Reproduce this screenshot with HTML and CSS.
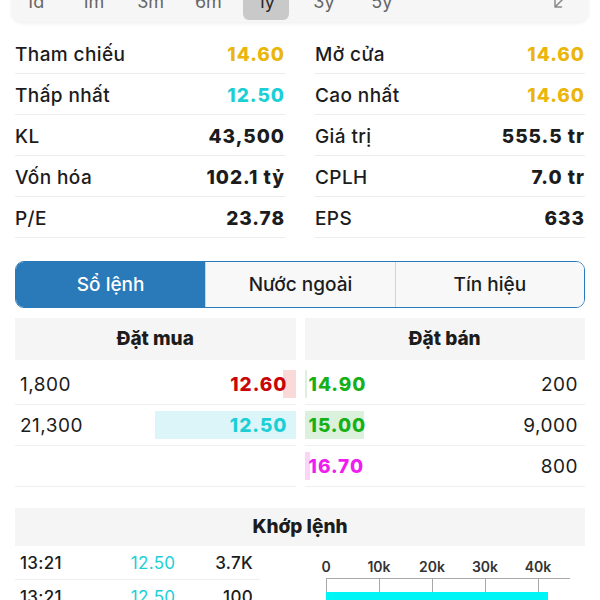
FILE: index.html
```html
<!DOCTYPE html>
<html lang="vi">
<head>
    <meta charset="UTF-8">
    <meta name="viewport" content="width=device-width, initial-scale=1.0">
    <title>Chi tiết mã</title>
    <link rel="stylesheet" href="styles.css">
</head>
<body>
    <div class="page">
        <div class="ranges">
            <span class="range">1d</span>
            <span class="range">1m</span>
            <span class="range">3m</span>
            <span class="range">6m</span>
            <span class="range active">1y</span>
            <span class="range">3y</span>
            <span class="range">5y</span>
            <span class="expand">
                <svg width="14" height="14" viewBox="0 0 14 14" fill="none" stroke="#8a8a8a" stroke-width="1.5" stroke-linecap="round" stroke-linejoin="round">
                    <path d="M13 1 L2 12 M2 5.5 V12 H8.5"/>
                </svg>
            </span>
        </div>

        <div class="stats">
            <div class="stat-col">
                <div class="stat"><span>Tham chiếu</span><b class="gold">14.60</b></div>
                <div class="stat"><span>Thấp nhất</span><b class="cyan">12.50</b></div>
                <div class="stat"><span>KL</span><b>43,500</b></div>
                <div class="stat"><span>Vốn hóa</span><b>102.1 tỷ</b></div>
                <div class="stat"><span>P/E</span><b>23.78</b></div>
            </div>
            <div class="stat-col">
                <div class="stat"><span>Mở cửa</span><b class="gold">14.60</b></div>
                <div class="stat"><span>Cao nhất</span><b class="gold">14.60</b></div>
                <div class="stat"><span>Giá trị</span><b>555.5 tr</b></div>
                <div class="stat"><span>CPLH</span><b>7.0 tr</b></div>
                <div class="stat"><span>EPS</span><b>633</b></div>
            </div>
        </div>

        <div class="tabs">
            <div class="tab active">Sổ lệnh</div>
            <div class="tab">Nước ngoài</div>
            <div class="tab">Tín hiệu</div>
        </div>

        <div class="book">
            <div class="side buy">
                <div class="side-head">Đặt mua</div>
                <div class="book-row">
                    <i class="bar bar-red" style="width: 13px"></i>
                    <span class="qty">1,800</span><b class="red">12.60</b>
                </div>
                <div class="book-row">
                    <i class="bar bar-cyan" style="width: 141px"></i>
                    <span class="qty">21,300</span><b class="cyan">12.50</b>
                </div>
                <div class="book-row"></div>
            </div>
            <div class="side sell">
                <div class="side-head">Đặt bán</div>
                <div class="book-row">
                    <i class="bar bar-green" style="width: 2px"></i>
                    <b class="green">14.90</b><span class="qty">200</span>
                </div>
                <div class="book-row">
                    <i class="bar bar-green" style="width: 59px"></i>
                    <b class="green">15.00</b><span class="qty">9,000</span>
                </div>
                <div class="book-row">
                    <i class="bar bar-pink" style="width: 5px"></i>
                    <b class="pink">16.70</b><span class="qty">800</span>
                </div>
            </div>
        </div>

        <div class="matches">
            <div class="matches-head">Khớp lệnh</div>
            <div class="matches-body">
                <div class="trades">
                    <div class="trade"><span>13:21</span><span class="cyan">12.50</span><span>3.7K</span></div>
                    <div class="trade"><span>13:21</span><span class="cyan">12.50</span><span>100</span></div>
                </div>
                <svg class="vol-chart" width="285" height="60" viewBox="0 0 285 60">
                    <g class="axis-labels" text-anchor="middle">
                        <text x="26" y="26">0</text>
                        <text x="79" y="26">10k</text>
                        <text x="132" y="26">20k</text>
                        <text x="185" y="26">30k</text>
                        <text x="238" y="26">40k</text>
                    </g>
                    <g stroke="#a8a8a8" stroke-width="1">
                        <line x1="26" y1="32.5" x2="270" y2="32.5"/>
                        <line x1="26.5" y1="32" x2="26.5" y2="60"/>
                        <line x1="79.5" y1="32" x2="79.5" y2="60"/>
                        <line x1="132.5" y1="32" x2="132.5" y2="60"/>
                        <line x1="185.5" y1="32" x2="185.5" y2="60"/>
                        <line x1="238.5" y1="32" x2="238.5" y2="60"/>
                    </g>
                    <rect x="26" y="46" width="222" height="20" fill="#00f6f6"/>
                </svg>
            </div>
        </div>
    </div>
</body>
</html>
```

FILE: styles.css
```css
body {
    margin: 0;
    background: #ffffff;
    font-family: Inter, "Noto Sans", sans-serif;
    color: #1c1c1c;
    overflow: hidden;
}
.page {
    display: flow-root;
    padding: 0 15px;
}

/* range selector, scrolled half out of view */
.ranges {
    display: flex;
    align-items: center;
    gap: 11.8px;
    height: 40px;
    margin: -18px -3px 0;
    background: #f6f6f6;
    border-radius: 10px;
    box-shadow: 0 1px 4px rgba(0, 0, 0, 0.08);
}
.range {
    width: 46px;
    height: 36px;
    line-height: 36px;
    text-align: center;
    font-size: 18px;
    color: #666;
    border-radius: 6px;
}
.range.active {
    background: #c9c9c9;
    color: #2a2a2a;
}
.expand {
    display: flex;
    margin-left: auto;
    margin-right: 21px;
}

/* stats */
.stats {
    display: grid;
    grid-template-columns: 1fr 1fr;
    gap: 30px;
    margin-top: 11px;
}
.stat {
    display: flex;
    justify-content: space-between;
    align-items: center;
    height: 40px;
    padding-top: 2px;
    box-sizing: border-box;
    border-bottom: 1px solid #ececec;
    height: 41px;
    font-size: 19px;
}
.stat span {
    font-weight: 500;
    letter-spacing: 0.4px;
}
.stat b {
    font-weight: 800;
    letter-spacing: 1px;
}

.gold { color: #ebb60c; }
.cyan { color: #1ccfd6; }
.red { color: #c80606; }
.green { color: #17b017; }
.pink { color: #f01cf0; }

/* tabs */
.tabs {
    display: grid;
    grid-template-columns: 1fr 1fr 1fr;
    height: 47px;
    margin-top: 23px;
    border: 1.5px solid #2a79b8;
    border-radius: 9px;
    overflow: hidden;
    box-sizing: border-box;
}
.tab {
    display: flex;
    justify-content: center;
    align-items: center;
    background: #f8f8f8;
    border-left: 1px solid #d2d2d2;
    font-size: 19px;
    font-weight: 500;
}
.tab:first-child {
    border-left: none;
}
.tab.active {
    background: #2a79b8;
    color: #fff;
}

/* order book */
.book {
    display: grid;
    grid-template-columns: 1fr 1fr;
    gap: 9px;
    margin-top: 10px;
}
.side-head {
    height: 42px;
    line-height: 42px;
    margin-bottom: 4px;
    text-align: center;
    background: #f5f5f5;
    font-size: 19px;
    font-weight: 800;
}
.book-row {
    position: relative;
    display: flex;
    justify-content: space-between;
    align-items: center;
    height: 40px;
    border-bottom: 1px solid #efefef;
    font-size: 19px;
}
.buy .book-row {
    padding: 0 8px 0 5px;
}
.sell .book-row {
    padding: 0 7px 0 4px;
}
.book-row span,
.book-row b {
    position: relative;
}
.qty {
    font-weight: 400;
    letter-spacing: 0.5px;
}
.book-row b {
    font-weight: 800;
    letter-spacing: 1px;
}
.bar {
    position: absolute;
    top: 6px;
    bottom: 6px;
}
.buy .bar { right: 0; }
.sell .bar { left: 0; }
.bar-red { background: #fad9d9; }
.bar-cyan { background: #dcf5f8; }
.bar-green { background: #dcf1dc; }
.bar-pink { background: #fbd4f6; }

/* matched orders */
.matches {
    margin-top: 21px;
}
.matches-head {
    height: 38px;
    line-height: 38px;
    text-align: center;
    background: #f5f5f5;
    font-size: 19px;
    font-weight: 800;
}
.matches-body {
    display: flex;
}
.trades {
    width: 245px;
}
.trade {
    display: grid;
    grid-template-columns: 1fr 1fr 1fr;
    align-items: center;
    height: 33px;
    padding: 0 7px 0 5px;
    border-bottom: 1px solid #efefef;
    font-size: 17px;
    font-weight: 500;
    letter-spacing: 0.3px;
}
.trade span:nth-child(2),
.trade span:nth-child(3) {
    text-align: right;
}
.trade .cyan {
    font-weight: 400;
}
.vol-chart {
    margin-left: auto;
    display: block;
}
.axis-labels {
    font-family: Inter, sans-serif;
    font-size: 14px;
    font-weight: 600;
    fill: #333;
}
```
